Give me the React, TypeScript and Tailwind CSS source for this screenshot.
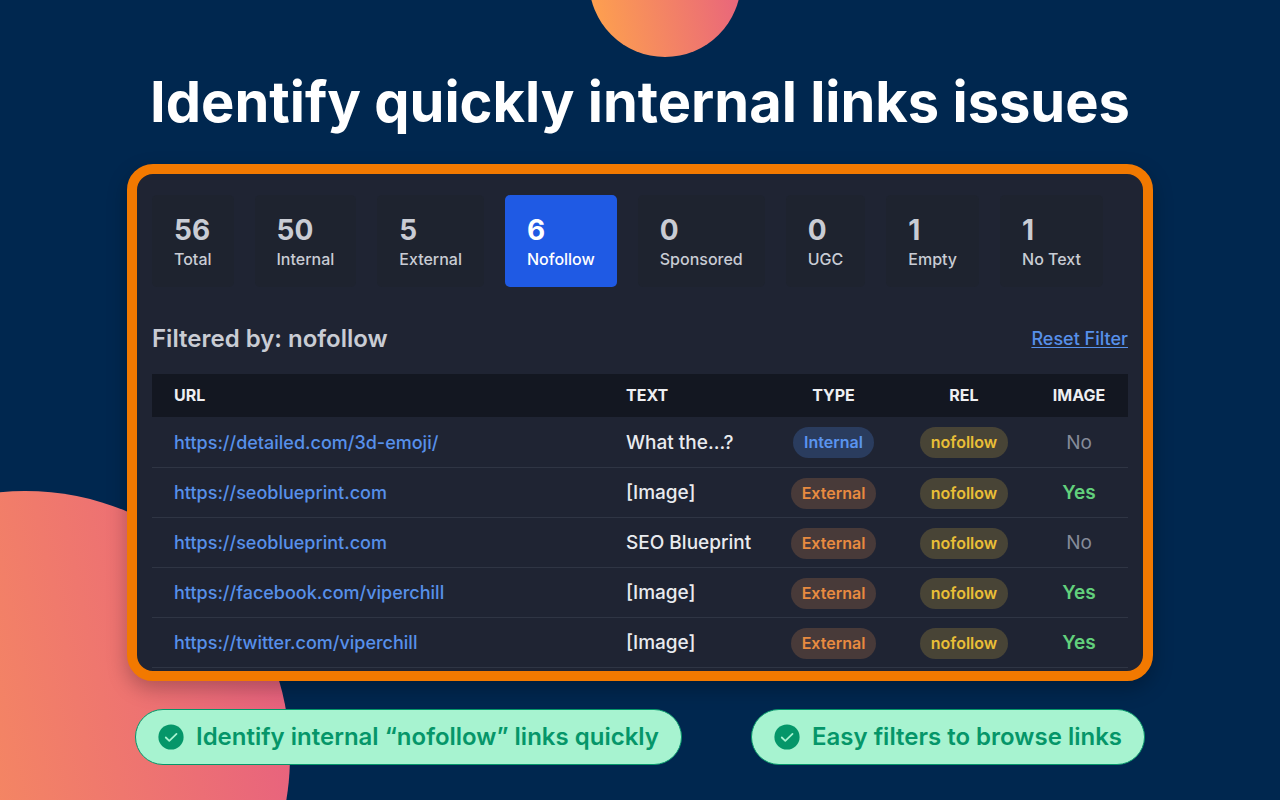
import { useState } from 'react';
import clsx from 'clsx';

const STATS = [
  { value: 56, label: 'Total' },
  { value: 50, label: 'Internal' },
  { value: 5, label: 'External' },
  { value: 6, label: 'Nofollow' },
  { value: 0, label: 'Sponsored' },
  { value: 0, label: 'UGC' },
  { value: 1, label: 'Empty' },
  { value: 1, label: 'No Text' },
];

const LINKS = [
  { url: 'https://detailed.com/3d-emoji/', text: 'What the...?', type: 'Internal', image: false },
  { url: 'https://seoblueprint.com', text: '[Image]', type: 'External', image: true },
  { url: 'https://seoblueprint.com', text: 'SEO Blueprint', type: 'External', image: false },
  { url: 'https://facebook.com/viperchill', text: '[Image]', type: 'External', image: true },
  { url: 'https://twitter.com/viperchill', text: '[Image]', type: 'External', image: true },
];

function StatFilters({ active, onSelect }: { active: string; onSelect: (label: string) => void }) {
  return (
    <div className="flex gap-[21px]">
      {STATS.map((stat) => (
        <button
          key={stat.label}
          onClick={() => onSelect(stat.label)}
          className={clsx(
            'flex flex-col items-start gap-px rounded-[5px] px-[22px] pt-[19px] pb-4 whitespace-nowrap',
            active === stat.label ? 'bg-[#1f5ae4] text-white' : 'bg-[#1e232f] text-[#c9ccd4]'
          )}
        >
          <span className="text-[28px] leading-8 font-bold">{stat.value}</span>
          <span className="text-base leading-6 font-medium">{stat.label}</span>
        </button>
      ))}
    </div>
  );
}

function Tag({ tone, children }: { tone: 'blue' | 'orange' | 'yellow'; children: string }) {
  return (
    <span
      className={clsx(
        'inline-block rounded-full px-[11px] text-base leading-[31px] font-semibold align-middle',
        tone === 'blue' && 'bg-[#2a3c5e] text-[#5a94ef]',
        tone === 'orange' && 'bg-[#483a39] text-[#e88b40]',
        tone === 'yellow' && 'bg-[#484436] text-[#e9be37]'
      )}
    >
      {children}
    </span>
  );
}

function LinksTable() {
  return (
    <table className="w-full table-fixed text-left text-[19px]">
      <colgroup>
        <col />
        <col className="w-[165px]" />
        <col className="w-[129px]" />
        <col className="w-[132px]" />
        <col className="w-[98px]" />
      </colgroup>
      <thead className="bg-[#131721] text-base text-[#eeeff2]">
        <tr className="h-[43px]">
          <th className="px-[22px] pb-0.5 font-bold">URL</th>
          <th className="px-[22px] pb-0.5 font-bold">TEXT</th>
          <th className="pb-0.5 text-center font-bold">TYPE</th>
          <th className="pb-0.5 text-center font-bold">REL</th>
          <th className="pb-0.5 text-center font-bold">IMAGE</th>
        </tr>
      </thead>
      <tbody>
        {LINKS.map((link, i) => (
          <tr key={i} className="h-[50px] border-b border-[#2f3544] whitespace-nowrap">
            <td className="px-[22px] pt-0.5 text-lg font-medium">
              <a href={link.url} className="text-[#5790ea]">
                {link.url}
              </a>
            </td>
            <td className="pt-0.5 pl-[22px] font-medium text-[#e9ebef]">{link.text}</td>
            <td className="pt-0.5 text-center">
              <Tag tone={link.type === 'Internal' ? 'blue' : 'orange'}>{link.type}</Tag>
            </td>
            <td className="pt-0.5 text-center">
              <Tag tone="yellow">nofollow</Tag>
            </td>
            <td className={clsx('pt-0.5 text-center', link.image ? 'font-semibold text-[#62d07c]' : 'text-[#858b99]')}>
              {link.image ? 'Yes' : 'No'}
            </td>
          </tr>
        ))}
      </tbody>
    </table>
  );
}

function Feature({ children }: { children: string }) {
  return (
    <div className="flex items-center gap-3 rounded-full border border-[#059669] bg-[#a7f3d0] px-[22px] py-3 whitespace-nowrap text-[#059669]">
      <svg viewBox="0 0 26 26" className="size-[26px]" fill="none">
        <circle cx="13" cy="13" r="12.6" fill="currentColor" />
        <path d="M7.8 13.5l3.5 3.4 7.2-7" stroke="#a7f3d0" strokeWidth="1.8" strokeLinecap="round" strokeLinejoin="round" />
      </svg>
      <span className="text-2xl leading-[30px] font-semibold">{children}</span>
    </div>
  );
}

export default function App() {
  const [active, setActive] = useState('Nofollow');

  return (
    <main className="relative isolate min-h-screen overflow-hidden bg-[#00274f] px-[127px] pt-[70px] font-[Inter,sans-serif]">
      {/* Background circles */}
      <div className="absolute -top-[95px] left-[589px] -z-10 size-[152px] rounded-full bg-linear-[78deg,#ffa54b,#e65d82]" />
      <div className="absolute top-[491px] -left-[240px] -z-10 size-[530px] rounded-full bg-linear-[78deg,#ffa54b,#e65d82]" />

      <h1 className="text-center text-[56px] leading-[64px] font-bold whitespace-nowrap text-white">
        Identify quickly internal links issues
      </h1>

      {/* Link report */}
      <section className="mt-[30px] rounded-[26px] border-[10px] border-[#f27900] bg-[#1f2433] px-[15px] pt-[21px] pb-[3px] shadow-[0_8px_20px_rgba(0,0,0,0.25)]">
        <StatFilters active={active} onSelect={setActive} />
        <div className="mt-9 mb-[19px] flex items-center justify-between">
          <h2 className="text-2xl font-semibold text-[#c9ccd4]">Filtered by: {active.toLowerCase()}</h2>
          <button className="text-lg font-medium text-[#5790ea] underline underline-offset-2" onClick={() => setActive('Total')}>
            Reset Filter
          </button>
        </div>
        <LinksTable />
      </section>

      {/* Features */}
      <div className="mt-7 flex justify-between px-2">
        <Feature>Identify internal “nofollow” links quickly</Feature>
        <Feature>Easy filters to browse links</Feature>
      </div>
    </main>
  );
}
